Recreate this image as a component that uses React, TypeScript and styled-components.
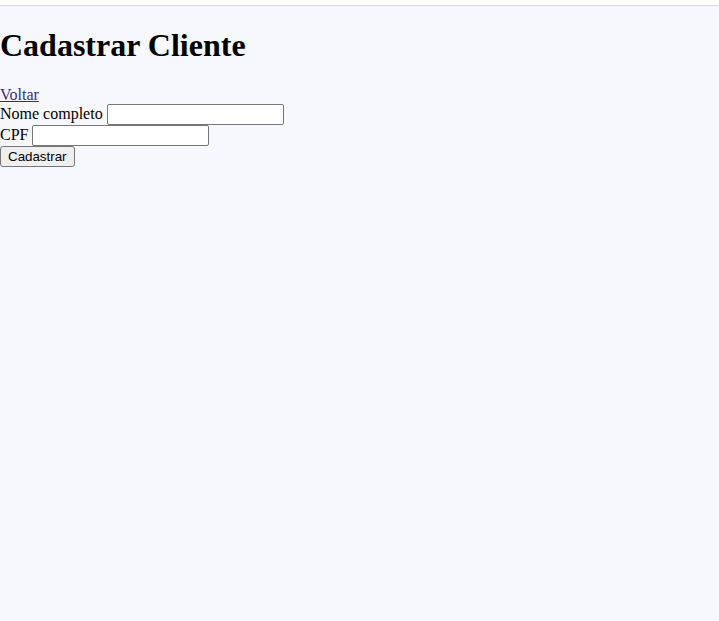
import React from "react";
import styled, { createGlobalStyle } from "styled-components";

const Global = createGlobalStyle`
  html, body {
    margin: 0;
    padding: 0;
    background: #f7f8fc;
    font-family: "Liberation Serif", "Times New Roman", serif;
    font-size: 16px;
    color: #000;
  }
`;

const TopStrip = styled.div`
  height: 5px;
  background: #ffffff;
  border-bottom: 1px solid #d9dadd;
`;

const Page = styled.main`
  display: block;
`;

const Title = styled.h1`
  font-size: 32px;
  font-weight: bold;
  margin: 21.44px 0;
`;

const BackLink = styled.a`
  color: #3b2a85;
  text-decoration: underline;
  cursor: pointer;
`;

const Form = styled.form`
  display: flex;
  flex-direction: column;
  align-items: flex-start;
`;

const Row = styled.div`
  display: flex;
  align-items: center;
`;

const Label = styled.label`
  margin-right: 4px;
`;

const Input = styled.input`
  font-family: "Liberation Sans", Arial, sans-serif;
  font-size: 13.33px;
  width: 177px;
  height: 21px;
  box-sizing: border-box;
  border: 1px solid #767676;
  border-radius: 2px;
  background: #fff;
  padding: 1px 2px;
`;

const Button = styled.button`
  font-family: "Liberation Sans", Arial, sans-serif;
  font-size: 13.33px;
  height: 21px;
  padding: 1px 7px;
  border: 1px solid #767676;
  border-radius: 3px;
  background: #efefef;
  color: #000;
`;

export default function App() {
  return (
    <>
      <Global />
      <TopStrip />
      <Page>
        <Title>Cadastrar Cliente</Title>
        <BackLink href="#">Voltar</BackLink>
        <Form onSubmit={(e) => e.preventDefault()}>
          <Row>
            <Label htmlFor="nome">Nome completo</Label>
            <Input id="nome" type="text" />
          </Row>
          <Row>
            <Label htmlFor="cpf">CPF</Label>
            <Input id="cpf" type="text" />
          </Row>
          <Button type="submit">Cadastrar</Button>
        </Form>
      </Page>
    </>
  );
}
